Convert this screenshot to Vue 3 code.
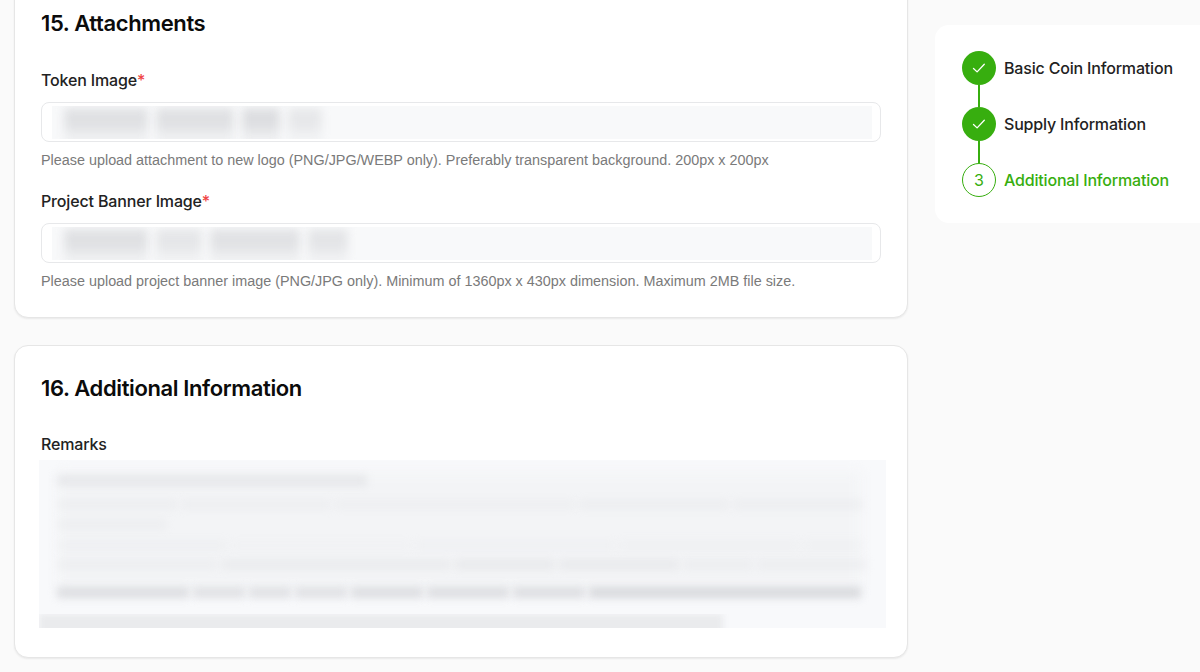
<script setup>
const tokenBars = [
  { w: 84, o: 0.85 }, { w: 78, o: 0.85 }, { w: 38, o: 0.95 }, { w: 34, o: 0.6 }
]
const bannerBars = [
  { w: 84, o: 0.85 }, { w: 46, o: 0.65 }, { w: 90, o: 0.8 }, { w: 40, o: 0.7 }
]
const remarkRows = [
  { gap: 15, segs: [[310, 0.45]] },
  { gap: 13, segs: [[120, 0.2], [150, 0.18], [240, 0.16], [150, 0.2], [130, 0.2]] },
  { gap: 9, segs: [[110, 0.2]] },
  { gap: 10, segs: [[170, 0.14], [180, 0.08], [200, 0.1], [180, 0.12], [60, 0.12]] },
  { gap: 8, segs: [[160, 0.2], [230, 0.28], [100, 0.34], [120, 0.34], [70, 0.22], [110, 0.22]] },
  { gap: 17, segs: [[132, 0.8], [52, 0.7], [42, 0.7], [52, 0.7], [72, 0.8], [82, 0.8], [72, 0.8], [272, 0.95]] }
]
</script>

<template>
  <div class="page">
    <main class="col">
      <section class="card first">
        <h2>15. Attachments</h2>
        <label class="lab">Token Image<span class="req">*</span></label>
        <div class="field">
          <div class="smear">
            <i v-for="(b, i) in tokenBars" :key="i" :style="{ width: b.w + 'px', opacity: b.o }"></i>
          </div>
        </div>
        <p class="help">Please upload attachment to new logo (PNG/JPG/WEBP only). Preferably transparent background. 200px x 200px</p>
        <label class="lab second">Project Banner Image<span class="req">*</span></label>
        <div class="field">
          <div class="smear">
            <i v-for="(b, i) in bannerBars" :key="i" :style="{ width: b.w + 'px', opacity: b.o }"></i>
          </div>
        </div>
        <p class="help">Please upload project banner image (PNG/JPG only). Minimum of 1360px x 430px dimension. Maximum 2MB file size.</p>
      </section>

      <section class="card info">
        <h2>16. Additional Information</h2>
        <label class="lab">Remarks</label>
        <div class="remarks">
          <div class="rows">
            <div v-for="(r, i) in remarkRows" :key="i" class="row" :style="{ marginTop: r.gap + 'px' }">
              <i v-for="(s, j) in r.segs" :key="j" :style="{ width: s[0] + 'px', opacity: s[1] }"></i>
            </div>
          </div>
          <div class="cutoff">
            <i></i>
          </div>
        </div>
      </section>
    </main>

    <aside class="steps">
      <div class="step">
        <span class="dot done">
          <svg viewBox="0 0 16 16" width="16" height="16"><path d="M2.5 8.5l3.6 3.4 7.2-7.6" fill="none" stroke="#fff" stroke-width="1.3" stroke-linecap="round" stroke-linejoin="round"/></svg>
        </span>
        <span class="name">Basic Coin Information</span>
      </div>
      <div class="step">
        <span class="dot done">
          <svg viewBox="0 0 16 16" width="16" height="16"><path d="M2.5 8.5l3.6 3.4 7.2-7.6" fill="none" stroke="#fff" stroke-width="1.3" stroke-linecap="round" stroke-linejoin="round"/></svg>
        </span>
        <span class="name">Supply Information</span>
      </div>
      <div class="step last">
        <span class="dot now">3</span>
        <span class="name active">Additional Information</span>
      </div>
    </aside>
  </div>
</template>

<style>
html, body { margin: 0; background: #fafafa; overflow: hidden; }
</style>

<style scoped>
.page {
  display: flex;
  align-items: flex-start;
  height: 672px;
  overflow: hidden;
  background: #fafafa;
  padding-left: 14px;
  box-sizing: border-box;
  font-family: Inter, "Noto Sans", sans-serif;
}
.col {
  width: 894px;
  flex: none;
  margin-top: -21px;
  display: flex;
  flex-direction: column;
  gap: 27px;
}
.card {
  background: #fff;
  border: 1px solid #e6e6e6;
  border-radius: 14px;
  box-shadow: 0 1px 2px rgba(0, 0, 0, 0.07);
  padding: 27px 26px 29px;
}
.card.first { padding-bottom: 26px; }
.card.info { padding-top: 26px; }
h2 {
  margin: 0 0 29px;
  font-size: 22px;
  line-height: 32px;
  font-weight: 600;
  letter-spacing: -0.38px;
  color: #0b0b0b;
}
.info h2 { margin-bottom: 28px; }
.lab {
  display: block;
  font-size: 16px;
  line-height: 24px;
  font-weight: 500;
  letter-spacing: -0.15px;
  color: #222;
}
.lab.second { margin-top: 19px; }
.req { color: #ef4444; }
.field {
  margin-top: 10px;
  height: 40px;
  box-sizing: border-box;
  border: 1.5px solid #e7e8ea;
  border-radius: 8px;
  padding: 2.5px 8.5px 2.5px 9.5px;
}
.smear {
  height: 100%;
  background: #f8f9fa;
  display: flex;
  gap: 8px;
  padding: 2px 0 0 12px;
  box-sizing: border-box;
  overflow: hidden;
}
.smear i {
  display: block;
  height: 34px;
  background: linear-gradient(#dcdde0 0 55%, #ebecee 70%);
  filter: blur(5px);
}
.help {
  margin: 8px 0 0;
  font-family: "Liberation Sans", Arial, sans-serif;
  font-size: 14.39px;
  line-height: 20px;
  color: #7a7a7a;
}
.remarks {
  margin: 4px -5px 0 -2px;
  height: 168px;
  background: #f8f9fb;
  overflow: hidden;
  position: relative;
  display: flex;
  flex-direction: column;
  justify-content: space-between;
}
.remarks::before {
  content: "";
  position: absolute;
  left: 20px;
  right: 26px;
  top: 12px;
  height: 118px;
  background: #f3f4f6;
  filter: blur(6px);
}
.rows { position: relative; padding-left: 18px; }
.row {
  display: flex;
  gap: 4px;
  height: 11px;
}
.row i {
  display: block;
  height: 100%;
  background: #d6d7db;
  filter: blur(4.5px);
}
.cutoff {
  position: relative;
  height: 14px;
  background: #f8f9fb;
  flex: none;
  overflow: hidden;
}
.cutoff i {
  display: block;
  width: 684px;
  height: 20px;
  background: #eaebed;
  filter: blur(3px);
}
.steps {
  margin: 25px 0 0 27px;
  flex: none;
  width: 290px;
  height: 198px;
  box-sizing: border-box;
  background: #fff;
  border-radius: 14px;
  padding: 26px 27px;
  display: flex;
  flex-direction: column;
  gap: 22px;
}
.step {
  position: relative;
  display: flex;
  align-items: center;
  gap: 8px;
  height: 34px;
}
.step:not(.last)::after {
  content: "";
  position: absolute;
  left: 16.25px;
  top: 34px;
  width: 1.5px;
  height: 22px;
  background: #37ae0f;
}
.dot {
  width: 34px;
  height: 34px;
  box-sizing: border-box;
  border-radius: 50%;
  display: flex;
  align-items: center;
  justify-content: center;
  flex: none;
}
.dot.done { background: #37ae0f; }
.dot.now {
  border: 1.6px solid #37ae0f;
  color: #37ae0f;
  font-size: 16px;
}
.name {
  font-size: 16px;
  font-weight: 500;
  letter-spacing: -0.18px;
  color: #222;
  white-space: nowrap;
}
.name.active { color: #37ae0f; }
</style>
